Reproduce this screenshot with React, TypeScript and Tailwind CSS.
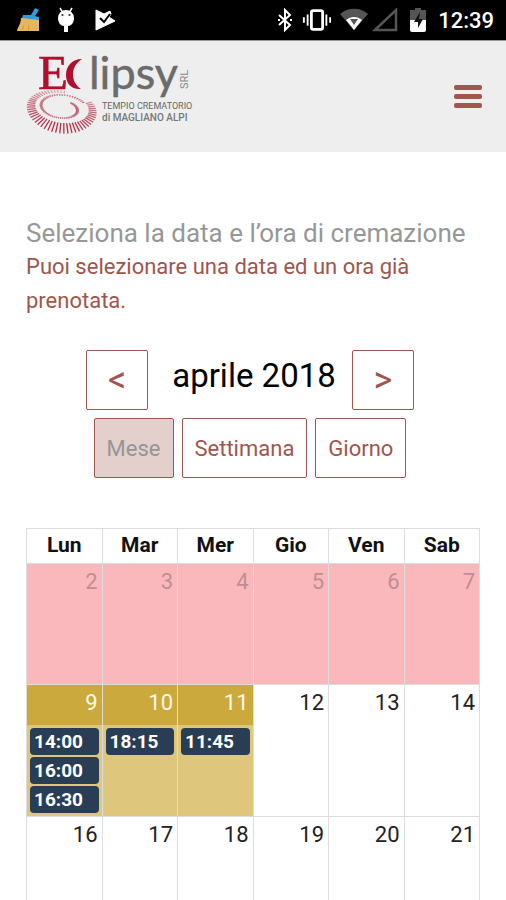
import React, { useState } from 'react';

const days = ["Lun", "Mar", "Mer", "Gio", "Ven", "Sab"];

const weeks = [
    [
        { day: 2, status: "closed", events: [] },
        { day: 3, status: "closed", events: [] },
        { day: 4, status: "closed", events: [] },
        { day: 5, status: "closed", events: [] },
        { day: 6, status: "closed", events: [] },
        { day: 7, status: "closed", events: [] },
    ],
    [
        { day: 9, status: "booked", events: ["14:00", "16:00", "16:30"] },
        { day: 10, status: "booked", events: ["18:15"] },
        { day: 11, status: "booked", events: ["11:45"] },
        { day: 12, status: "free", events: [] },
        { day: 13, status: "free", events: [] },
        { day: 14, status: "free", events: [] },
    ],
    [
        { day: 16, status: "free", events: [] },
        { day: 17, status: "free", events: [] },
        { day: 18, status: "free", events: [] },
        { day: 19, status: "free", events: [] },
        { day: 20, status: "free", events: [] },
        { day: 21, status: "free", events: [] },
    ],
];

const cellStyle = {
    closed: "bg-[#fab8bd]",
    booked: "bg-[#dec67c]",
    free: "bg-white",
};

const dayStyle = {
    closed: "text-[#c08d92]",
    booked: "bg-[#cca93d] text-[#fdf8e6]",
    free: "text-[#222222]",
};

// Rays of the sun: an outer ring that turns inwards into a small spiral
const rays = Array.from({ length: 110 }, (_, i) => {
    const turns = (i / 109) * 1.9;
    const angle = -Math.PI / 2 - turns * Math.PI * 2;
    const low = (Math.sin(angle) + 1) / 2;
    const outer = turns < 0.85;
    const r = outer ? 27 : Math.max(12, 24 - (turns - 0.85) * 11);
    const len = outer ? 5 + low * 6 : 3;
    return {
        x1: 38 + Math.cos(angle) * r,
        y1: 57 + Math.sin(angle) * r * 0.55,
        x2: 38 + Math.cos(angle) * (r + len),
        y2: 57 + Math.sin(angle) * (r + len) * (outer ? 0.55 + low * 0.12 : 0.55),
        opacity: outer ? 0.35 + low * 0.6 : 0.6,
    };
});

function StatusBar() {
    return (
        <div className="flex h-10 shrink-0 items-center justify-between bg-black pl-4 pr-3 text-white">
            <div className="flex items-center gap-4">
                {/* broom */}
                <svg width="24" height="26" viewBox="0 0 24 26">
                    <path d="M5 11h18v13H1c0-3 4-7 4-13z" fill="#e5b75c" />
                    <path d="M6 23l2-5M12 24l1-6" stroke="#cf9a3c" strokeWidth="1" />
                    <path d="M7 8l8 0 4-7 4 2-4 6 4 1v3L6 11z" fill="#2f9be0" />
                </svg>
                {/* debug android */}
                <svg width="20" height="28" viewBox="0 0 20 28">
                    <path d="M4 2l3 5M16 2l-3 5" stroke="#fff" strokeWidth="1.500" />
                    <path d="M2 12a8 8 0 0 1 16 0c0 5-3 8-6 8v6H8v-6c-3 0-6-3-6-8z" fill="#fff" />
                    <circle cx="6.500" cy="9" r="1.100" fill="#333" />
                    <circle cx="13.500" cy="9" r="1.100" fill="#333" />
                </svg>
                {/* play check */}
                <svg width="24" height="24" viewBox="0 0 24 24">
                    <path d="M4 2l8 4 6-3 1 3-2 3 6 4L4 22z" fill="#fff" stroke="#fff" strokeWidth="1" strokeLinejoin="round" />
                    <path d="M8 10l4 4 6-8" fill="none" stroke="#000" strokeWidth="2" />
                </svg>
            </div>
            <div className="flex items-center">
                {/* bluetooth */}
                <svg width="18" height="24" viewBox="0 0 18 24" fill="none" stroke="#fff" strokeWidth="2">
                    <path d="M3 7l11 10-5 5V2l5 5L3 17" />
                    <path d="M2 12h2M14 12h2" />
                </svg>
                {/* vibration */}
                <svg width="30" height="24" viewBox="0 0 32 24" className="ml-2" fill="none" stroke="#fff" strokeWidth="2">
                    <rect x="10" y="2" width="12" height="20" rx="2" strokeWidth="3" />
                    <path d="M6 6v12M26 6v12M2 9v6M30 9v6" />
                </svg>
                {/* wifi */}
                <svg width="28" height="24" viewBox="0 0 28 24" className="ml-2">
                    <path d="M14 22L0 6c8-7 20-7 28 0z" fill="#555" />
                    <path d="M14 22L6 12c5-4 11-4 16 0z" fill="#fff" />
                    <path d="M10 11h8l-4 6z" fill="#555" />
                </svg>
                {/* no signal */}
                <svg width="26" height="24" viewBox="0 0 26 24" className="ml-1">
                    <path d="M3 22L24 2v20z" fill="none" stroke="#555" strokeWidth="2.500" />
                </svg>
                {/* battery */}
                <svg width="16" height="24" viewBox="0 0 16 24" className="ml-3">
                    <path d="M5 0h6v2h5v10H0V2h5z" fill="#555" />
                    <path d="M0 12h16v10a2 2 0 0 1-2 2H2a2 2 0 0 1-2-2z" fill="#fff" />
                    <path d="M10 4l-6 10h4v6l5-9H9z" fill="#111" />
                </svg>
                <span className="ml-3 text-[22px] font-medium">12:39</span>
            </div>
        </div>
    );
}

function Logo() {
    return (
        <svg width="172" height="100" viewBox="0 -10 172 100" role="img" aria-label="Eclipsy srl">
            <g transform="rotate(8 38 57)">
                {rays.map((ray, i) => (
                    <line key={i} x1={ray.x1} y1={ray.y1} x2={ray.x2} y2={ray.y2} stroke="#b0253f" strokeWidth="1.300" opacity={ray.opacity} />
                ))}
            </g>
            <text x="14" y="38" fontSize="49" fill="#b01030" stroke="#b01030" strokeWidth="0.600" fontFamily="Liberation Serif, serif">E</text>
            {/* eclipse crescent */}
            <path d="M58 8C48 8 42 15 42 24C42 33 48 39 57 38C51 34 49 29 49 23C49 17 52 12 58 8z" fill="#b01030" />
            <text x="65" y="38" fontSize="45" fill="#6b6b6b" stroke="#6b6b6b" strokeWidth="0.500" fontFamily="Lato, sans-serif">lipsy</text>
            <text transform="translate(164 38) rotate(-90)" fontSize="11" fill="#8a8a8a" fontFamily="Roboto, sans-serif">SRL</text>
            <text x="78" y="58" fontSize="9" fill="#666" fontFamily="Roboto, sans-serif">TEMPIO CREMATORIO</text>
            <text x="78" y="70" fontSize="10" fontWeight="500" fill="#777" fontFamily="Roboto, sans-serif">di MAGLIANO ALPI</text>
        </svg>
    );
}

function App() {

    const [view, setView] = useState("Mese");

    return (
        <div className="flex h-screen flex-col bg-white font-[Roboto,sans-serif]">
            <StatusBar />

            {/* Header */}
            <header className="flex h-28 shrink-0 items-center justify-between border-t border-[#999999] bg-[#eeeeee] px-6">
                <a href="#" className="-mt-3">
                    <Logo />
                </a>
                <button aria-label="Menu" className="flex w-7 flex-col gap-1">
                    <span className="h-[5px] rounded-xs bg-[#a0554d]"></span>
                    <span className="h-[5px] rounded-xs bg-[#a0554d]"></span>
                    <span className="h-[5px] rounded-xs bg-[#a0554d]"></span>
                </button>
            </header>

            <main className="min-h-0 flex-1 overflow-y-auto px-[26px] pt-16 [scrollbar-width:none]">
                <h1 className="text-[26px] leading-[34px] text-[#979797]">Seleziona la data e l’ora di cremazione</h1>
                <p className="text-[22px] leading-[34px] text-[#a0554d]">Puoi selezionare una data ed un ora già prenotata.</p>

                {/* Toolbar */}
                <div className="mt-8 flex items-center justify-center pr-1.5">
                    <button aria-label="Mese precedente" className="h-[60px] w-[62px] rounded-xs border border-[#a0554d] text-4xl text-[#a0554d]">&lt;</button>
                    <h2 className="pr-4 pb-2 pl-6 text-[33px] text-black">aprile 2018</h2>
                    <button aria-label="Mese successivo" className="h-[60px] w-[62px] rounded-xs border border-[#a0554d] text-4xl text-[#a0554d]">&gt;</button>
                </div>
                <div className="mt-2 flex justify-center gap-2 pr-1.5">
                    {["Mese", "Settimana", "Giorno"].map((name) => (
                        <button
                            key={name}
                            onClick={() => setView(name)}
                            className={`h-[60px] rounded-xs border border-[#a0554d] px-3 text-[22px] ${view === name ? "bg-[#e3d0cd] text-[#959595]" : "text-[#a0554d]"}`}
                        >
                            {name}
                        </button>
                    ))}
                </div>

                {/* Calendar */}
                <table className="mt-[50px] w-full table-fixed border-collapse">
                    <thead>
                        <tr className="h-[35px]">
                            {days.map((day) => (
                                <th key={day} className="border border-[#dddddd] p-0 pb-0.5 text-[21px] leading-7 font-bold text-[#111111]">{day}</th>
                            ))}
                        </tr>
                    </thead>
                    <tbody>
                        {weeks.map((week, i) => (
                            <tr key={i} className="h-[121px]">
                                {week.map((cell) => (
                                    <td key={cell.day} className={`border border-[#dddddd] p-0 align-top ${cellStyle[cell.status]}`}>
                                        <div className={`h-10 pr-1 text-right text-[22px] leading-9 ${dayStyle[cell.status]}`}>{cell.day}</div>
                                        {cell.events.length > 0 && (
                                            <div className="flex flex-col gap-0.5 px-[3px] py-[3px]">
                                                {cell.events.map((time) => (
                                                    <a key={time} href="#" className="h-[27px] rounded-sm bg-[#293e54] px-1 text-[19px] leading-[27px] font-bold text-white">{time}</a>
                                                ))}
                                            </div>
                                        )}
                                    </td>
                                ))}
                            </tr>
                        ))}
                    </tbody>
                </table>
            </main>
        </div>
    );
}

export default App;
